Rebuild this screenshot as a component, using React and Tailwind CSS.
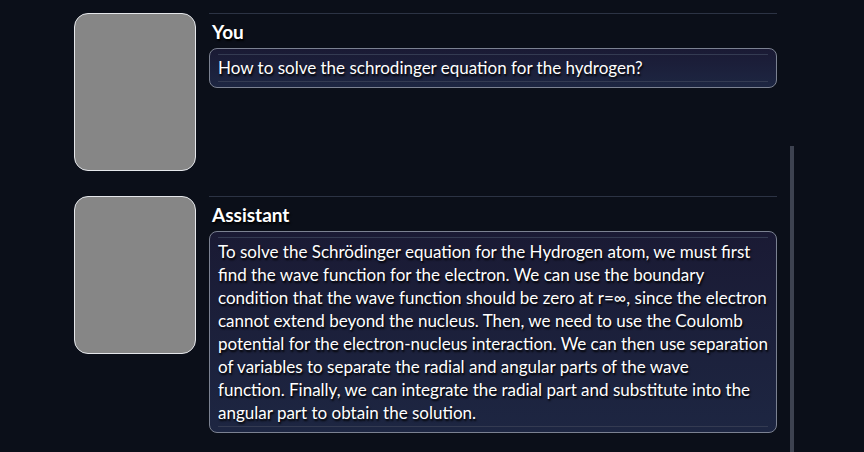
const lines = [
  'To solve the Schrödinger equation for the Hydrogen atom, we must first',
  'find the wave function for the electron. We can use the boundary',
  'condition that the wave function should be zero at r=∞, since the electron',
  'cannot extend beyond the nucleus. Then, we need to use the Coulomb',
  'potential for the electron-nucleus interaction. We can then use separation',
  'of variables to separate the radial and angular parts of the wave',
  'function. Finally, we can integrate the radial part and substitute into the',
  'angular part to obtain the solution.',
];

function Avatar() {
  return <div className="w-[122px] h-[158px] shrink-0 rounded-[14px] border border-[#e5e7eb] bg-[#868686]" />;
}

function Message({ name, children }) {
  return (
    <div className="flex gap-[13px]">
      <Avatar />
      <div className="flex-1 border-t border-[#2c3344]">
        <div className="pl-[3px] pt-[7px] pb-[5px] text-[19px] font-bold leading-[22px] text-white [text-shadow:1px_2px_2px_#000]">
          {name}
        </div>
        <div className="rounded-[8px] border border-[#7b8191] bg-gradient-to-b from-[#1a1a34] to-[#1d2642] px-2 py-[5px]">
          <div className="border-y border-[#343b52] py-[2px] text-[17px] leading-[23px] text-white [text-shadow:1px_2px_2px_#000]">
            {children}
          </div>
        </div>
      </div>
    </div>
  );
}

export default function App() {
  return (
    <div className="h-[452px] w-[864px] overflow-hidden bg-[#0b0f19] font-['Lato',sans-serif]">
      <div className="flex h-full">
        <div className="ml-[74px] mt-[13px] flex w-[703px] flex-col gap-[25px]">
          <Message name="You">
            <div className="leading-[22px]">How to solve the schrodinger equation for the hydrogen?</div>
          </Message>
          <Message name="Assistant">
            {lines.map(l => (
              <div key={l} className="whitespace-nowrap">{l}</div>
            ))}
          </Message>
        </div>
        <div className="ml-[13px] mt-[146px] h-full w-[4px] bg-[#3d4250]" />
      </div>
    </div>
  );
}
